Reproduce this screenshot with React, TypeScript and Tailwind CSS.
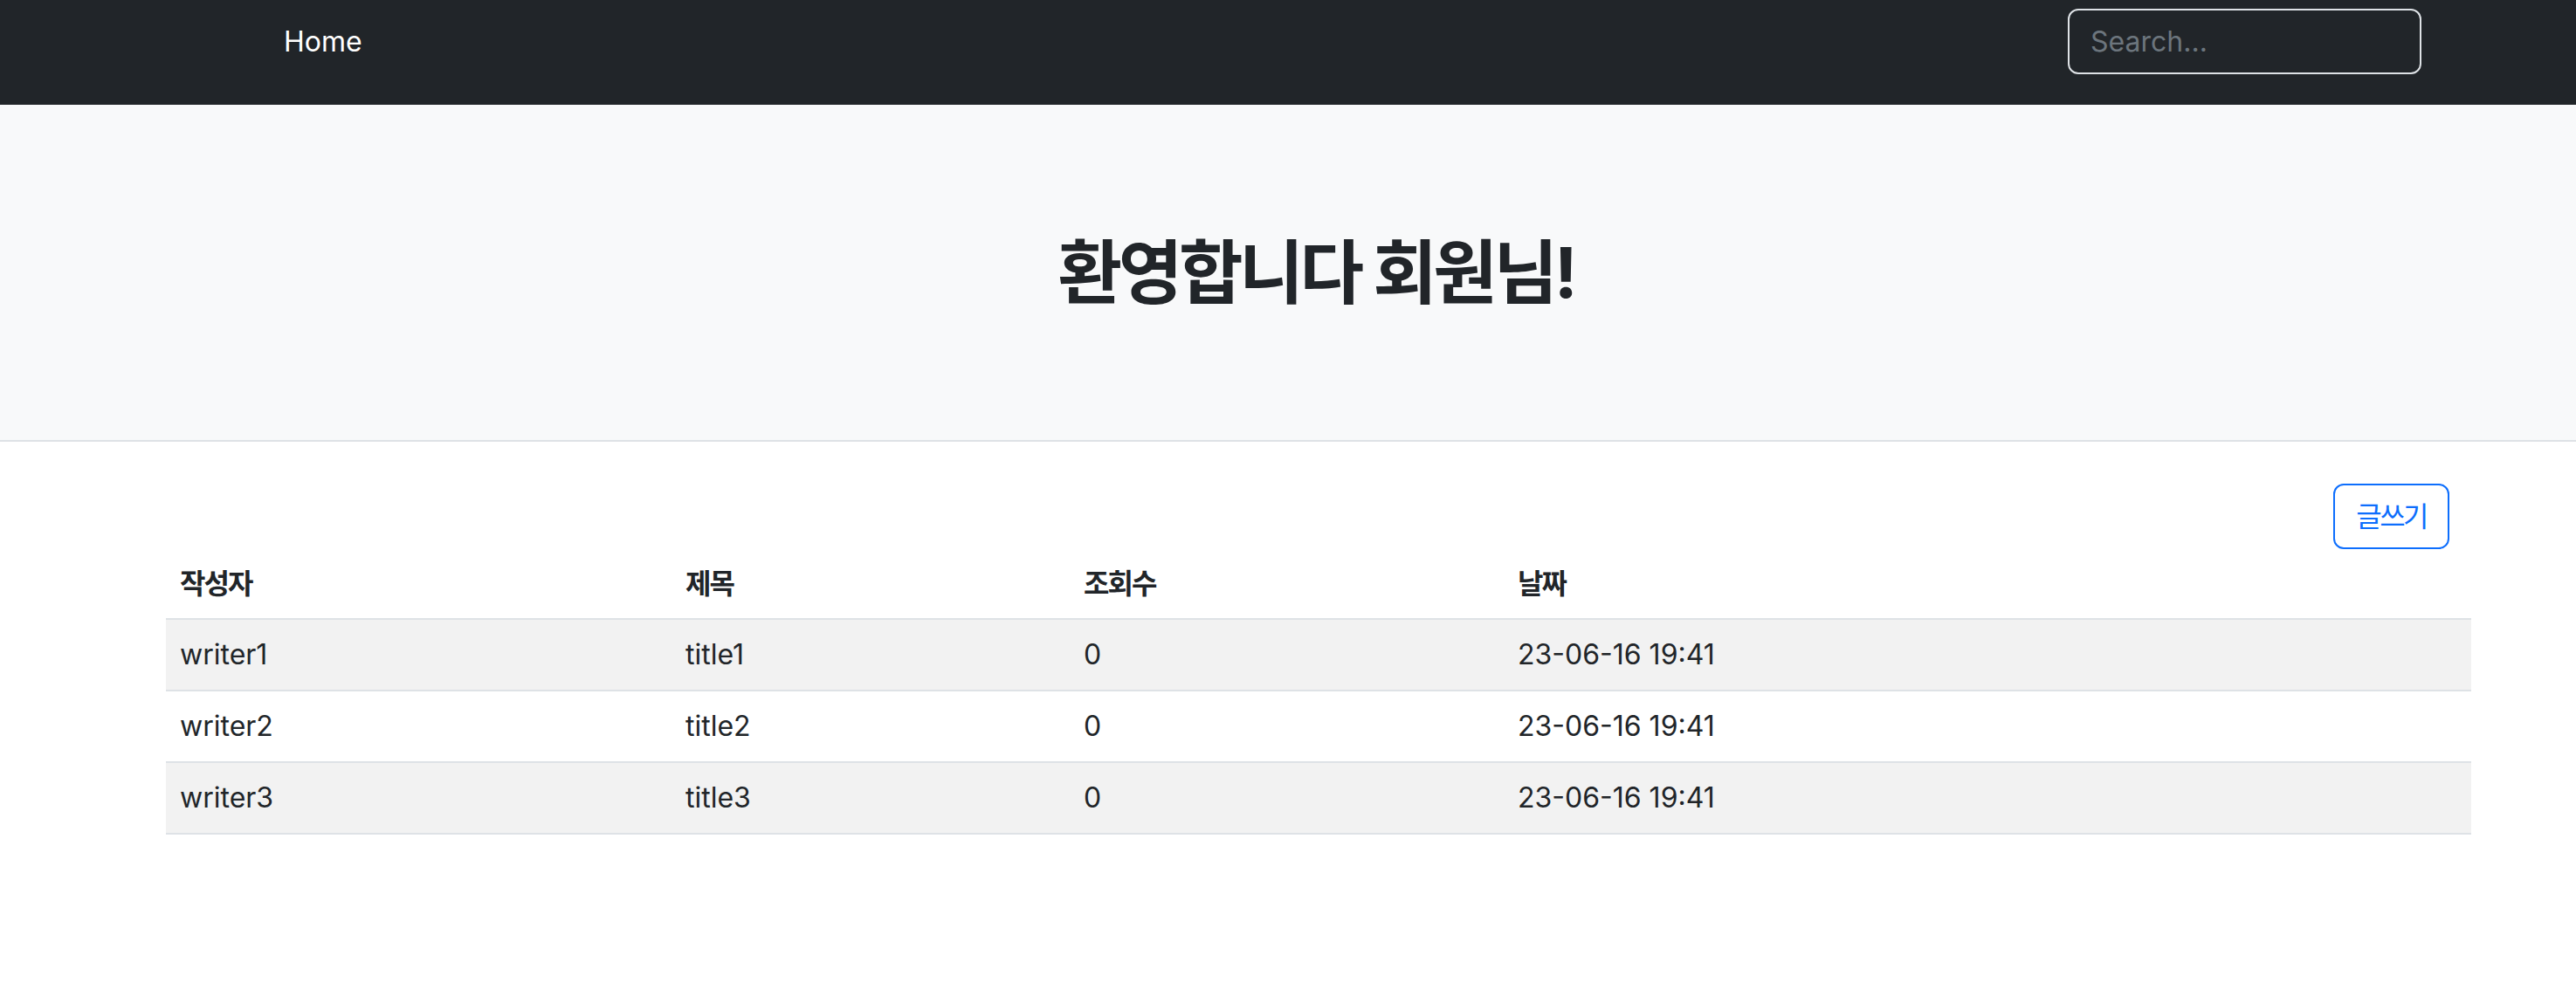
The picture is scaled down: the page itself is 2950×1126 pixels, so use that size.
import React from 'react'

const ROWS = [
  { writer: 'writer1', title: 'title1', views: 0, date: '23-06-16 19:41' },
  { writer: 'writer2', title: 'title2', views: 0, date: '23-06-16 19:41' },
  { writer: 'writer3', title: 'title3', views: 0, date: '23-06-16 19:41' },
]

const FONT = "font-['Inter','Noto_Sans_CJK_KR',sans-serif]"

export default function App() {
  return (
    <div className={`${FONT} min-h-[1126px] w-full bg-white text-[#212529]`}>
      {/* navbar */}
      <nav className="flex h-[120px] items-start justify-between bg-[#212529] pl-[325px] pr-[177px] pt-[10px]">
        <a className="flex h-[75px] items-center text-[32px] text-white">Home</a>
        <input
          placeholder="Search..."
          className="h-[75px] w-[405px] rounded-[12px] border-2 border-[#dee2e6] bg-[#212529] px-[24px] text-[32px] text-white outline-none placeholder:text-[#6c757d]"
        />
      </nav>

      {/* hero */}
      <section className="flex h-[386px] items-center justify-center border-b-2 border-[#dee2e6] bg-[#f8f9fa] pl-[64px]">
        <h1 className="text-[80px] font-bold tracking-[-0.055em]">환영합니다 회원님!</h1>
      </section>

      {/* board */}
      <main className="pl-[190px] pr-[120px] pt-[48px]">
        <div className="flex justify-end pr-[25px]">
          <button className="h-[75px] rounded-[12px] border-2 border-[#0d6efd] px-[24px] text-[32px] tracking-[-0.08em] text-[#0d6efd]">
            글쓰기
          </button>
        </div>
        <table className="w-[2640px] table-fixed border-collapse text-[32px]">
          <colgroup>
            <col className="w-[579px]" />
            <col className="w-[456px]" />
            <col className="w-[497px]" />
            <col />
          </colgroup>
          <thead>
            <tr className="h-[80px] border-b-2 border-[#dee2e6] text-left">
              <th className="px-[16px] font-bold tracking-[-0.06em]">작성자</th>
              <th className="px-[16px] font-bold tracking-[-0.06em]">제목</th>
              <th className="px-[16px] font-bold tracking-[-0.06em]">조회수</th>
              <th className="px-[16px] font-bold tracking-[-0.06em]">날짜</th>
            </tr>
          </thead>
          <tbody>
            {ROWS.map((r, i) => (
              <tr
                key={r.writer}
                className={`h-[82px] border-b-2 border-[#dee2e6] ${i % 2 === 0 ? 'bg-[#f2f2f2]' : 'bg-white'}`}
              >
                <td className="px-[16px]">{r.writer}</td>
                <td className="px-[16px]">{r.title}</td>
                <td className="px-[16px]">{r.views}</td>
                <td className="px-[16px]">{r.date}</td>
              </tr>
            ))}
          </tbody>
        </table>
      </main>
    </div>
  )
}
